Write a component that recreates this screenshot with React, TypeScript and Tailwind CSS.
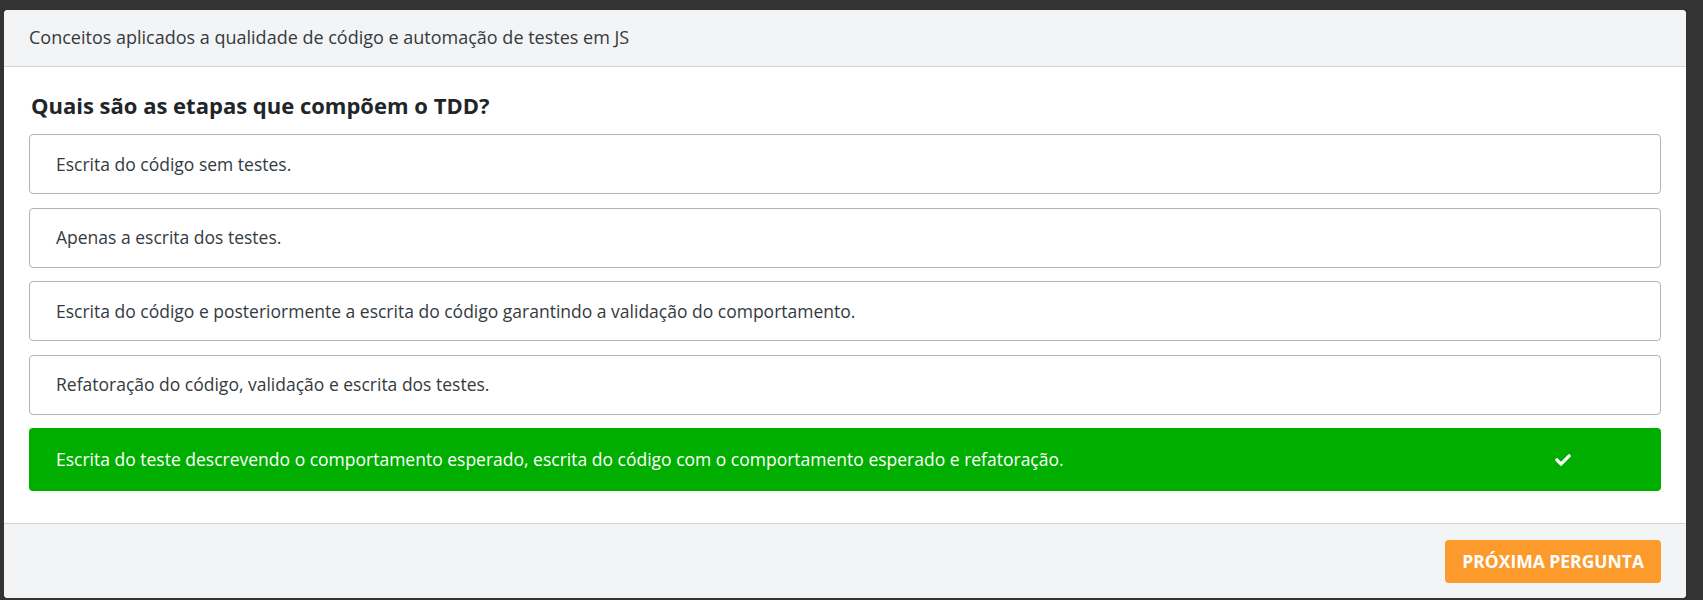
import React from "react";
import { FaCheck } from "react-icons/fa";

interface Option {
    id: number;
    text: string;
    correct?: boolean;
}

const options: Option[] = [
    { id: 1, text: "Escrita do código sem testes." },
    { id: 2, text: "Apenas a escrita dos testes." },
    {
        id: 3,
        text: "Escrita do código e posteriormente a escrita do código garantindo a validação do comportamento.",
    },
    { id: 4, text: "Refatoração do código, validação e escrita dos testes." },
    {
        id: 5,
        text: "Escrita do teste descrevendo o comportamento esperado, escrita do código com o comportamento esperado e refatoração.",
        correct: true,
    },
];

const OptionItem: React.FC<{ option: Option }> = ({ option }) => {
    if (option.correct) {
        return (
            <div className="flex h-[63px] items-center justify-between rounded-[4px] bg-[#00ae00] pl-[27px] pr-[90px] text-white">
                <span>{option.text}</span>
                <FaCheck className="h-[16px] w-[16px]" />
            </div>
        );
    }
    return (
        <div className="flex h-[60px] items-center rounded-[4px] border-[1.5px] border-[#adb5bd] bg-white pl-[26px] text-[#343a40]">
            <span>{option.text}</span>
        </div>
    );
};

export default function App() {
    return (
        <div
            className="min-h-[600px] bg-[#333333] pl-[4px] pt-[10px]"
            style={{ fontFamily: '"Open Sans", "Noto Sans", sans-serif' }}
        >
            <div className="flex h-[588px] w-[1682px] flex-col overflow-hidden rounded-[4px] bg-white text-[17.5px]">
                <div className="flex h-[57px] items-center border-b border-[#ced4da] bg-[#f3f4f6] pl-[25px] pb-[2px] text-[18px] text-[#343a40]">
                    Conceitos aplicados a qualidade de código e automação de testes em JS
                </div>

                <div className="px-[25px] pt-[25px] pb-[32px]">
                    <h1 className="mb-[15px] pl-[2px] text-[22px] font-bold leading-[27px] text-[#212529]">
                        Quais são as etapas que compõem o TDD?
                    </h1>
                    <div className="flex flex-col gap-[13.5px]">
                        {options.map((option) => (
                            <OptionItem key={option.id} option={option} />
                        ))}
                    </div>
                </div>

                <div className="flex flex-1 items-center justify-end border-t-[1.5px] border-[#ced4da] bg-[#f3f4f6] pr-[25px]">
                    <button className="h-[43px] rounded-[4px] bg-[#fd9a2c] px-[17px] text-[17.5px] font-bold uppercase text-white">
                        Próxima pergunta
                    </button>
                </div>
            </div>
        </div>
    );
}
